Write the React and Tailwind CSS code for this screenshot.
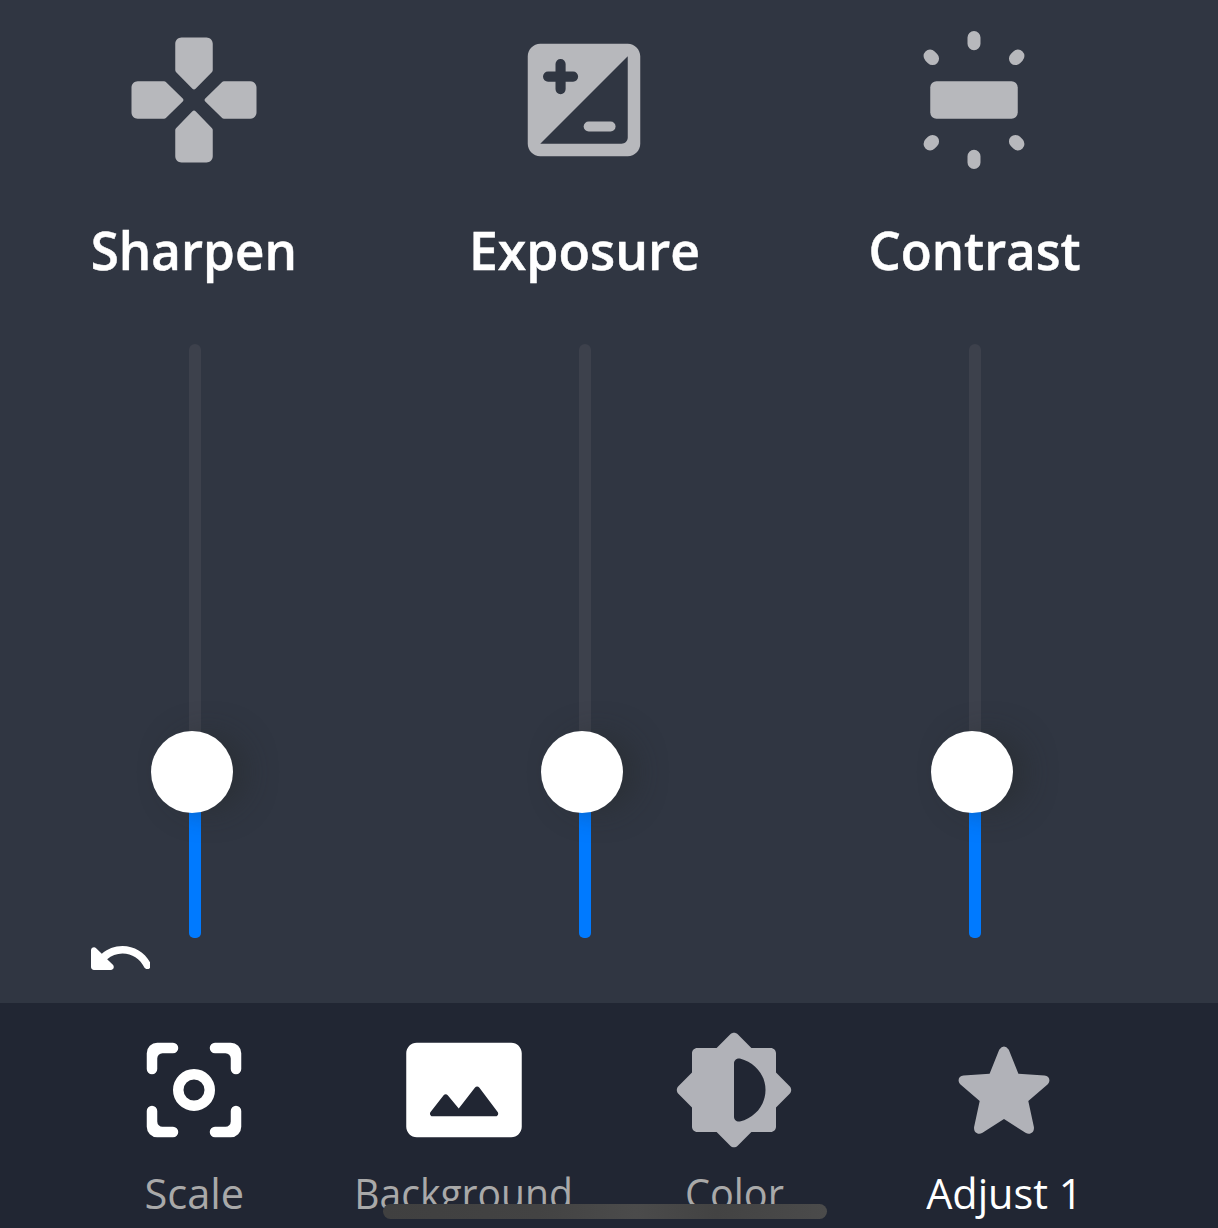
const QUARTERS = [0, 90, 180, 270];

function SharpenIcon() {
  return (
    <svg viewBox="0 0 24 24" className="size-[150px]" fill="#b7b8bc">
      {QUARTERS.map((a) => (
        <path
          key={a}
          transform={`rotate(${a} 12 12)`}
          d="M15 7.190V3c0-.55-.45-1-1-1h-4c-.55 0-1 .45-1 1v4.190c0 .13.05.26.15.35l2.600 2.660c.15.15.35.15.5 0l2.600-2.660c.1-.09.15-.21.15-.35z"
        />
      ))}
    </svg>
  );
}

function ExposureIcon() {
  return (
    <svg viewBox="0 0 24 24" className="size-[150px]" fill="#b7b8bc">
      <path
        fillRule="evenodd"
        d="M19 3H5c-1.100 0-2 .9-2 2v14c0 1.100.9 2 2 2h14c1.100 0 2-.9 2-2V5c0-1.100-.9-2-2-2zM18 19H5L19 5v13c0 .55-.45 1-1 1z"
      />
      <path d="M6.250 8.250h4M8.250 6.250v4" stroke="#303642" strokeWidth="1.620" strokeLinecap="round" />
      <rect x="11.95" y="15.45" width="5.1" height="1.6" rx=".8" />
    </svg>
  );
}

function ContrastIcon() {
  return (
    <svg viewBox="0 0 24 24" className="size-[150px]" fill="#b7b8bc">
      <rect x="5" y="9" width="14" height="6" rx="1" />
      <path
        d="M12 2v1M12 21v1M4.970 4.970l.4.4M19.030 4.970l-.4.4M4.970 19.030l.4-.4M19.030 19.030l-.4-.4"
        stroke="#b7b8bc"
        strokeWidth="2.080"
        strokeLinecap="round"
      />
    </svg>
  );
}

function ScaleIcon() {
  return (
    <svg viewBox="0 0 24 24" className="size-[126px]" fill="#fff">
      {QUARTERS.map((a) => (
        <path
          key={a}
          transform={`rotate(${a} 12 12)`}
          d="M3 5a2 2 0 0 1 2-2h3a1 1 0 0 1 0 2H6a1 1 0 0 0-1 1v2a1 1 0 0 1-2 0z"
        />
      ))}
      <circle cx="12" cy="12" r="3" fill="none" stroke="#fff" strokeWidth="2" />
    </svg>
  );
}

function BackgroundIcon() {
  return (
    <svg viewBox="0 0 24 24" className="size-[126px]" fill="#fff">
      <path
        fillRule="evenodd"
        d="M21 3H3c-1.100 0-2 .9-2 2v14c0 1.100.9 2 2 2h18c1.100 0 2-.9 2-2V5c0-1.100-.9-2-2-2zM8.900 12.980l2.100 2.530 3.100-3.990c.2-.26.6-.26.8.01l3.510 4.680c.25.33.01.8-.4.8H6.020c-.42 0-.65-.48-.39-.81L8.120 13c.19-.26.57-.27.78-.02z"
      />
    </svg>
  );
}

function ColorIcon() {
  return (
    <svg viewBox="0 0 24 24" className="size-[126px]" fill="#b1b2b8">
      <path
        fillRule="evenodd"
        d="M20 8.690V5c0-.55-.45-1-1-1h-3.690l-2.600-2.600c-.39-.39-1.020-.39-1.410 0L8.690 4H5c-.55 0-1 .45-1 1v3.690l-2.600 2.600c-.39.39-.39 1.020 0 1.410L4 15.310V19c0 .55.45 1 1 1h3.690l2.600 2.600c.39.39 1.020.39 1.410 0l2.610-2.600H19c.55 0 1-.45 1-1v-3.690l2.600-2.600c.39-.39.39-1.020 0-1.410L20 8.690zM12 17.090V6.910c0-.6.55-1.060 1.130-.9C16.060 6.800 18 9.170 18 12s-1.940 5.200-4.870 5.990c-.58.15-1.130-.3-1.130-.9z"
      />
    </svg>
  );
}

function StarIcon() {
  return (
    <svg viewBox="941 1027 126 126" className="size-[126px]" fill="#b1b2b8">
      <path d="M999.200 1049.800Q1004 1043 1008.800 1049.800L1018.400 1073.800L1044.500 1075.600C1049.500 1076 1051 1081 1047.500 1084.500L1028.300 1101L1033.900 1127C1034.500 1132.500 1030 1135.300 1025.500 1132.800L1004 1119L982.500 1132.800C978 1135.300 973.500 1132.500 974.100 1127L979.700 1101L960.500 1084.500C957 1081 958.500 1076 963.500 1075.600L989.600 1073.800Z" />
    </svg>
  );
}

const ADJUSTMENTS = [
  { label: "Sharpen", Icon: SharpenIcon, text: "scale-x-[0.965]" },
  { label: "Exposure", Icon: ExposureIcon, text: "scale-x-[0.975]" },
  { label: "Contrast", Icon: ContrastIcon, text: "scale-x-[0.96]" },
];

const TABS = [
  { label: "Scale", Icon: ScaleIcon, text: "text-[#a9a9a9] scale-x-[0.99]" },
  { label: "Background", Icon: BackgroundIcon, text: "text-[#a9a9a9] scale-x-[0.93]" },
  { label: "Color", Icon: ColorIcon, text: "text-[#a9a9a9] scale-x-[0.945]" },
  { label: "Adjust 1", Icon: StarIcon, text: "text-white scale-x-[0.985]" },
];

function Slider() {
  return (
    <div className="relative mt-[44px] ml-[189px] h-[594px] w-3 rounded-full bg-[#3d414c]">
      <div className="absolute bottom-0 h-[166px] w-3 rounded-b-[5px] bg-[#007aff]" />
      <div className="absolute top-[387px] -left-[38px] size-[82px] rounded-full bg-white shadow-[16px_0_30px_-4px_rgba(38,42,42,0.5)]" />
    </div>
  );
}

export default function App() {
  return (
    <div className="relative flex h-[1228px] w-[1218px] flex-col overflow-hidden bg-[#303642] font-['Open_Sans',sans-serif]">
      <main className="h-[1003px]">
        <div className="grid w-[1170px] grid-cols-3">
          {ADJUSTMENTS.map(({ label, Icon, text }) => (
            <section key={label} className="h-[938px] pt-[25px]">
              <div className="flex w-[388px] flex-col items-center">
                <Icon />
                <h2 className={`mt-[39px] h-[86px] text-[53px] leading-[72px] font-semibold whitespace-nowrap text-white [-webkit-text-stroke:0.5px_white] ${text}`}>
                  {label}
                </h2>
              </div>
              <Slider />
            </section>
          ))}
        </div>
        <button className="mt-2 ml-[91px] block" aria-label="Undo">
          <svg viewBox="2 8 19.67 8" className="h-6 w-[59px]" fill="#fff">
            <path d="M12.500 8c-2.650 0-5.050.99-6.900 2.600L3.710 8.710C3.080 8.080 2 8.520 2 9.410V15c0 .55.45 1 1 1h5.590c.89 0 1.340-1.080.71-1.710l-1.910-1.910c1.390-1.160 3.160-1.880 5.120-1.880 3.160 0 5.890 1.840 7.190 4.500.27.56.91.84 1.500.64.71-.23 1.070-1.040.75-1.720C20.230 10.420 16.650 8 12.500 8z" />
          </svg>
        </button>
      </main>
      <nav className="grid h-[225px] grid-cols-[repeat(4,270px)] bg-[#212633] pl-[59px]">
        {TABS.map(({ label, Icon, text }) => (
          <div key={label} className="flex flex-col items-center pt-6">
            <Icon />
            <span className={`mt-[10px] text-[42px] leading-[60px] whitespace-nowrap ${text}`}>{label}</span>
          </div>
        ))}
      </nav>
      <div className="absolute top-[1204px] left-[383px] h-[15px] w-[444px] rounded-full bg-[linear-gradient(90deg,#404040,#434343_35%,#4b4b4b_57%,#434343_75%,#4b4b4b)]" />
    </div>
  );
}
